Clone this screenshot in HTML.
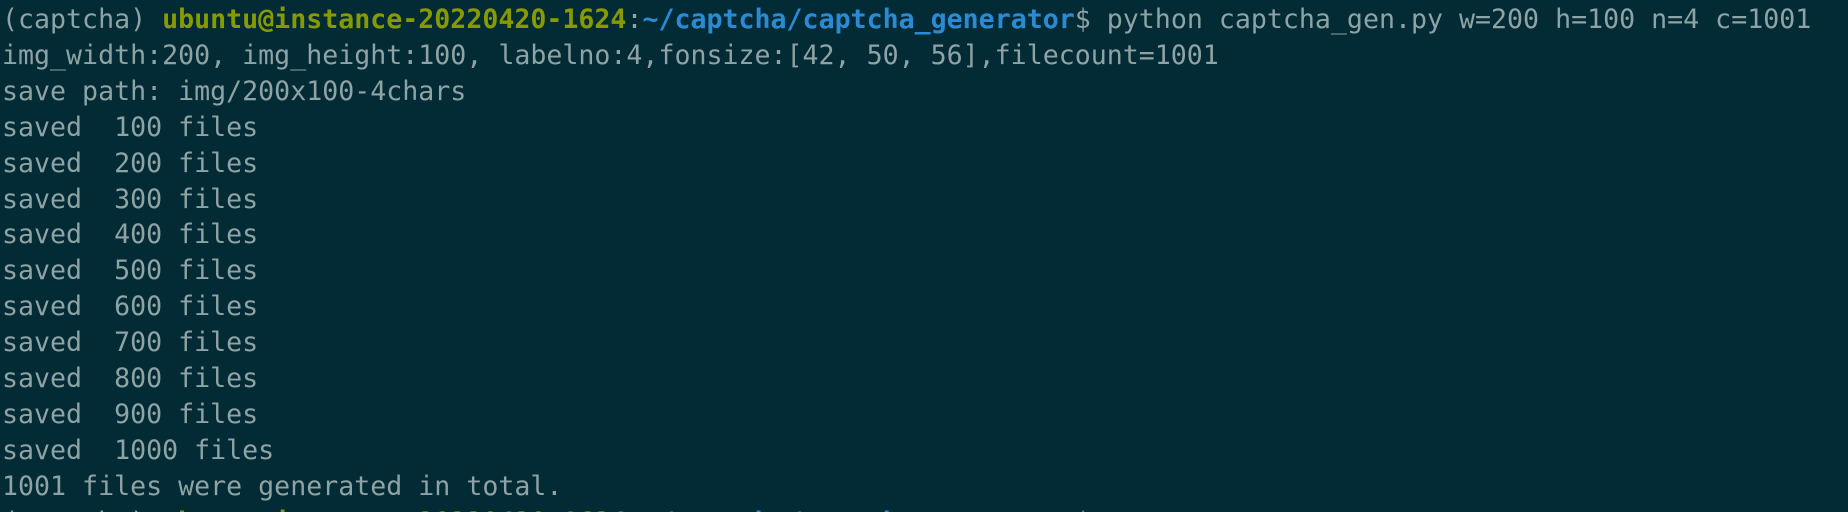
<!DOCTYPE html>
<html><head><meta charset="utf-8"><style>
html,body{margin:0;padding:0;background:#022b36;width:1848px;height:512px;overflow:hidden}
pre{margin:0;padding:2px 0 0 2px;font-family:"DejaVu Sans Mono","Liberation Mono",monospace;font-size:26.6px;line-height:35.9px;color:#8fa2a4;white-space:pre}
.g{color:#879a02;font-weight:bold}
.b{color:#2a8bd4;font-weight:bold}
</style></head><body><pre>(captcha) <span class="g">ubuntu@instance-20220420-1624</span>:<span class="b">~/captcha/captcha_generator</span>$ python captcha_gen.py w=200 h=100 n=4 c=1001
img_width:200, img_height:100, labelno:4,fonsize:[42, 50, 56],filecount=1001
save path: img/200x100-4chars
saved  100 files
saved  200 files
saved  300 files
saved  400 files
saved  500 files
saved  600 files
saved  700 files
saved  800 files
saved  900 files
saved  1000 files
1001 files were generated in total.
(captcha) <span class="g">ubuntu@instance-20220420-1624</span>:<span class="b">~/captcha/captcha_generator</span>$ </pre></body></html>
